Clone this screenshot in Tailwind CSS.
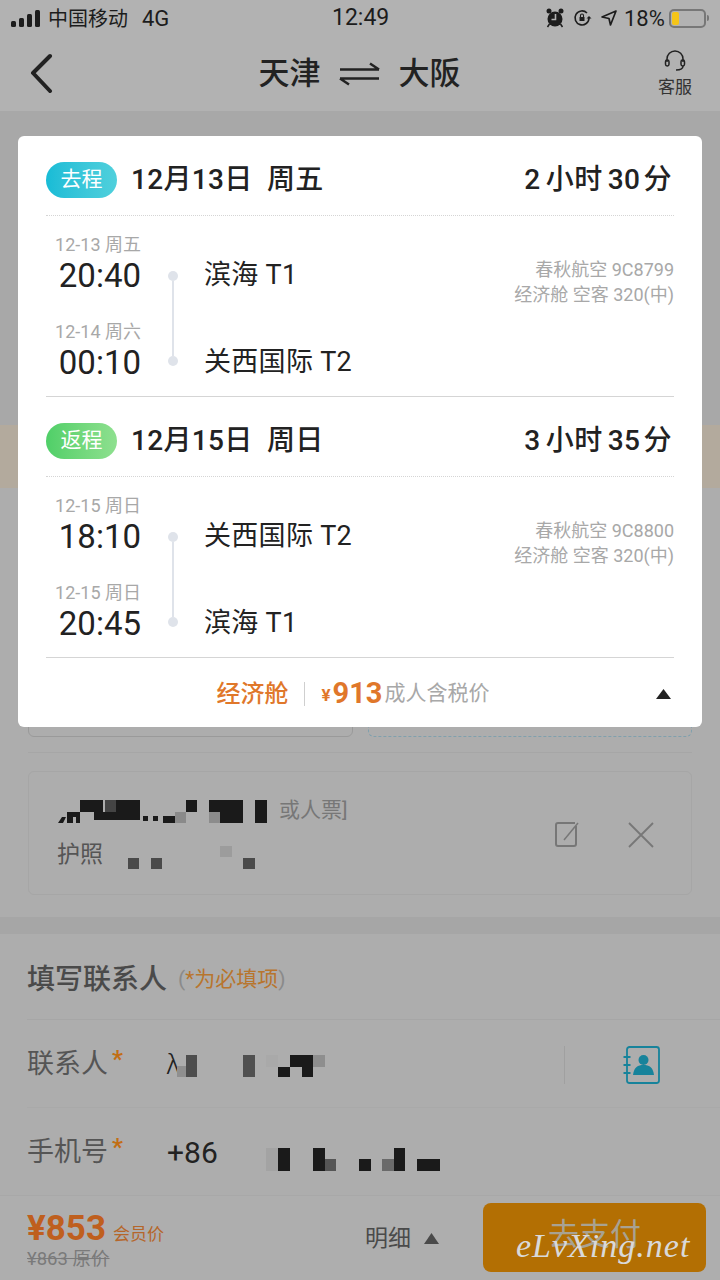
<!DOCTYPE html>
<html lang="zh">
<head>
    <meta charset="UTF-8">
    <meta name="viewport" content="width=device-width, initial-scale=1.0">
    <title>Order</title>
    <script src="https://cdn.jsdelivr.net/npm/@tailwindcss/browser@4"></script>
</head>
<body class="bg-[#adadad]">
<div class="relative w-[720px] h-[1280px] overflow-hidden font-['Roboto','Noto_Sans_CJK_SC',sans-serif] text-[#222]">

    <!-- status bar + nav -->
    <header class="h-[111px] bg-[#b2b2b2]">
        <div class="h-[36px] flex items-center pl-[11px] text-[20px] text-[#1c1c1c]">
            <svg width="32" height="18" viewBox="0 0 32 18" class="mr-[5px]" fill="#1c1c1c">
                <rect x="0" y="12" width="5" height="6" rx="1.5"/><rect x="8" y="9" width="5" height="9" rx="1.5"/><rect x="16" y="5" width="5" height="13" rx="1.5"/><rect x="24" y="1" width="5" height="17" rx="1.5"/>
            </svg>
            <span class="w-[284px]">中国移动<span class="ml-[14px] text-[22px]">4G</span></span>
            <span class="w-[213px] text-[23px]">12:49</span>
            <svg width="20" height="22" viewBox="0 0 20 22" fill="#1c1c1c"><circle cx="10" cy="12" r="7.500"/><circle cx="4" cy="4" r="2.500"/><circle cx="16" cy="4" r="2.500"/><path d="M4.500 17l-2 3M15.500 17l2 3" stroke="#1c1c1c" stroke-width="1.500"/><path d="M10.500 7v5.500H6.500" fill="none" stroke="#b2b2b2" stroke-width="1.600"/></svg>
            <svg width="20" height="20" viewBox="0 0 20 20" class="ml-[7px]" fill="none" stroke="#1c1c1c" stroke-width="1.600"><path d="M17 10a7 7 0 1 1-2-5"/><path d="M17 8l-2.500 2.500h5z" fill="#1c1c1c" stroke="none"/><rect x="7.500" y="9" width="5" height="4" fill="#1c1c1c" stroke="none"/><path d="M8.500 9V7.500a1.500 1.500 0 0 1 3 0V9" stroke-width="1.100"/></svg>
            <svg width="18" height="18" viewBox="0 0 18 18" class="ml-[8px]" fill="none" stroke="#1c1c1c" stroke-width="1.700"><path d="M16 2L2 8l7 1.500L10.500 16z" stroke-linejoin="round"/></svg>
            <span class="ml-[6px] text-[22px]">18%</span>
            <div class="ml-[4px] w-[37px] h-[19px] border-2 border-[#777] rounded-[5px] p-[1px]">
                <div class="w-[7px] h-full bg-[#f5c518] rounded-[2px]"></div>
            </div>
            <div class="ml-[1px] w-[2px] h-[6px] bg-[#777] rounded-r-full"></div>
        </div>
        <div class="h-[75px] relative flex items-center justify-center">
            <svg width="26" height="40" viewBox="0 0 26 40" class="absolute left-[29px] top-[17px]" fill="none" stroke="#222" stroke-width="4" stroke-linecap="round" stroke-linejoin="round"><path d="M21 3L4 20l17 18"/></svg>
            <div class="flex items-center text-[31px] font-medium text-[#222] -ml-[1px] mt-[1px]">
                <span>天津</span>
                <svg width="42" height="26" viewBox="0 0 42 26" class="mx-[18px]" fill="none" stroke="#222" stroke-width="2.500"><path d="M1 8.500h39M31 2.500l9 6M1 17.500h39M10 23.500l-9-6"/></svg>
                <span>大阪</span>
            </div>
            <div class="absolute right-[28px] top-[13px] flex flex-col items-center text-[17px] leading-[22px] text-[#333]">
                <svg width="24" height="24" viewBox="0 0 24 24" class="mb-[3px]" fill="none" stroke="#222" stroke-width="1.500"><path d="M4 13V10a8 8 0 0 1 16 0v3"/><rect x="2.500" y="11" width="3.500" height="6" rx="1.700"/><rect x="18" y="11" width="3.500" height="6" rx="1.700"/><path d="M20 17c0 3-3 4-7 4"/></svg>
                <span>客服</span>
            </div>
        </div>
    </header>

    <!-- page behind the sheet -->
    <main>
        <div class="h-[314px] bg-[#a8a8a8]"></div>
        <div class="h-[63px] bg-[#b3aa9d]"></div>
        <div class="h-[212px]"></div>
        <div class="h-[53px] mx-[28px] flex gap-[15px] border-b border-[#a6a6a6] pb-[15px]">
            <div class="w-[325px] border border-[#9a9a9a] rounded-[6px] -mt-[15px]"></div>
            <div class="flex-1 border border-dashed border-[#7fa0ad] rounded-[6px] -mt-[15px]"></div>
        </div>
        <div class="relative mt-[18px] mx-[28px] h-[124px] border border-[#a6a6a6] rounded-[6px] flex items-center">
            <div class="pl-[28px] w-full pt-[6px]">
                <div class="pl-[222px] h-[30px] text-[21px] leading-[26px] text-[#777] -mt-[4px]">或人票]</div>
                <div class="mt-[12px] text-[23px] leading-[32px] text-[#555]">护照</div>
            </div>
            <svg width="28" height="28" viewBox="0 0 28 28" class="absolute left-[524px] top-[48px]" fill="none" stroke="#777" stroke-width="2"><path d="M23 6v18a2 2 0 0 1-2 2H5a2 2 0 0 1-2-2V5a2 2 0 0 1 2-2h17"/><path d="M25 3L11 20" stroke-width="1.500"/></svg>
            <svg width="28" height="28" viewBox="0 0 28 28" class="absolute left-[598px] top-[49px]" fill="none" stroke="#777" stroke-width="1.800"><path d="M2 2l24 24M26 2L2 26"/></svg>
        </div>
        <div class="h-[22px]"></div>
        <div class="h-[17px] bg-[#a6a6a6]"></div>
        <section class="pl-[27px]">
            <div class="h-[86px] flex items-center border-b border-[#a6a6a6] pt-[6px]">
                <span class="text-[28px] font-medium text-[#4a4a4a]">填写联系人</span>
                <span class="ml-[11px] text-[21px] text-[#8a8a8a]">(<span class="text-[#b8752e]">*为必填项</span>)</span>
            </div>
            <div class="h-[88px] flex items-center border-b border-[#a9a9a9] text-[27px] text-[#555] pt-[2px]">
                <span class="w-[139px] relative">联系人<span class="absolute left-[85px] top-0 text-[24px] leading-[30px] font-bold text-[#c26e14]">*</span></span>
                <span class="text-[#222] text-[28px] font-light">λ</span>
                <div class="ml-auto w-[1px] h-[38px] bg-[#a0a0a0] mr-[58px]"></div>
                <svg width="38" height="38" viewBox="0 0 38 38" class="mr-[59px]" fill="none" stroke="#17839b" stroke-width="1.800">
                    <rect x="4" y="1" width="32" height="36" rx="2.500"/>
                    <path d="M0.500 11h7M0.500 19h7M0.500 27h7"/>
                    <circle cx="20.500" cy="14" r="5" fill="#17839b" stroke="none"/>
                    <path d="M10 29c1-8 5-10 10.500-10s9.500 2 10.500 10z" fill="#17839b" stroke="none"/>
                </svg>
            </div>
            <div class="h-[87px] flex items-center text-[27px] text-[#555] pt-[2px]">
                <span class="w-[140px] relative">手机号<span class="absolute left-[85px] top-0 text-[24px] leading-[30px] font-bold text-[#c26e14]">*</span></span>
                <span class="text-[#222] text-[30px]">+86</span>
            </div>
        </section>
    </main>

    <!-- pixelated personal data -->
    <svg width="720" height="1280" viewBox="0 0 720 1280" class="absolute left-0 top-0">
        <g fill="#1a1a1a">
            <path d="M58 823l4-6 4 0-3 6zM67 812h13v11h-4v-6h-3v6h-6z"/>
            <rect x="80" y="800" width="23" height="12"/><rect x="105" y="800" width="11" height="12" fill="#444"/>
            <rect x="116" y="800" width="24" height="20"/><rect x="94" y="812" width="24" height="8"/>
            <rect x="143" y="816" width="5" height="5"/><rect x="153" y="816" width="5" height="5"/>
            <rect x="186" y="800" width="11" height="12"/><rect x="163" y="816" width="12" height="7"/>
            <rect x="175" y="812" width="11" height="11" fill="#8a8a8a"/>
            <rect x="209" y="800" width="34" height="12"/><rect x="220" y="812" width="23" height="11"/><rect x="209" y="812" width="11" height="11" fill="#8c8c8c"/>
            <rect x="255" y="800" width="12" height="23"/>
            <rect x="128" y="858" width="11" height="11" fill="#4a4a4a"/><rect x="151" y="858" width="11" height="11" fill="#4a4a4a"/>
            <rect x="220" y="846" width="12" height="11" fill="#9c9c9c"/><rect x="243" y="858" width="12" height="11" fill="#4a4a4a"/>

            <rect x="186" y="1055" width="11" height="22" fill="#4d4d4d"/><rect x="177" y="1066" width="9" height="11" fill="#8f8f8f"/>
            <rect x="243" y="1055" width="12" height="22" fill="#505050"/><rect x="266" y="1055" width="12" height="12" fill="#a9a9a9"/>
            <rect x="278" y="1067" width="12" height="10"/><rect x="290" y="1055" width="23" height="12"/><rect x="302" y="1067" width="11" height="10"/><rect x="313" y="1055" width="12" height="12" fill="#8e8e8e"/>

            <rect x="266" y="1148" width="12" height="23" fill="#a3a3a3"/><rect x="278" y="1148" width="12" height="23"/>
            <rect x="313" y="1148" width="12" height="23"/><rect x="325" y="1159" width="11" height="12" fill="#555"/>
            <rect x="359" y="1159" width="12" height="12"/><rect x="382" y="1159" width="12" height="12" fill="#6a6a6a"/><rect x="394" y="1148" width="11" height="23"/>
            <rect x="417" y="1159" width="23" height="12"/>
        </g>
    </svg>

    <!-- bottom bar -->
    <footer class="absolute left-0 right-0 bottom-0 h-[85px] bg-[#aeaeae] border-t border-[#a8a8a8] flex items-center pl-[27px] pr-[14px]">
        <div class="w-[338px] mt-[4px]">
            <div class="flex items-baseline leading-[34px]">
                <span class="text-[35px] font-bold text-[#bf5f1e]">¥853</span>
                <span class="ml-[7px] text-[17px] text-[#b5662a]">会员价</span>
            </div>
            <div class="text-[18.500px] leading-[20px] -mt-[2px] text-[#7a7a7a] line-through">¥863 原价</div>
        </div>
        <span class="text-[23px] text-[#4a4a4a] mt-[2px]">明细</span>
        <svg width="15" height="11" viewBox="0 0 15 11" class="ml-[13px]" fill="#4a4a4a"><path d="M7.500 0L15 11H0z"/></svg>
        <div class="ml-auto relative w-[223px] h-[69px] bg-[#b36f03] rounded-[8px] flex items-center justify-center text-[31px] text-[#a8a292] -mt-[1px] pb-[4px]">
            去支付
        </div>
    </footer>
    <div class="absolute left-[516px] top-[1226px] font-['Liberation_Serif',serif] italic text-[34px] leading-[40px] tracking-[1px] text-[#d9d9d9]">eLvXing.net</div>

    <!-- flight sheet -->
    <div class="absolute left-[18px] top-[136px] w-[684px] h-[591px] bg-white rounded-[6px] px-[28px]">
        <section>
            <div class="h-[80px] flex items-center border-b border-dotted border-[#d5d5d5] pt-[8px]">
                <span class="w-[71px] h-[36px] rounded-full bg-gradient-to-r from-[#17bcd6] to-[#4fd0dc] text-white text-[21px] flex items-center justify-center">去程</span>
                <span class="ml-[14px] text-[28px] font-medium tracking-[0.3px] mt-[1px]">12月13日&nbsp; 周五</span>
                <span class="ml-auto text-[28px] font-medium tracking-[0.5px] mt-[1px] pr-[2px]">2<span class="mx-[5px]">小时</span>30<span class="ml-[3px]">分</span></span>
            </div>
            <div class="grid grid-cols-[95px_64px_1fr] grid-rows-[87px_auto] h-[181px] pt-[19px] border-b border-[#d5d5d5]">
                <div class="text-right">
                    <div class="text-[18px] leading-[20px] text-[#a8a8a8]">12-13 周五</div>
                    <div class="text-[33px] leading-[41px]">20:40</div>
                </div>
                <div class="row-span-2 flex flex-col items-center pt-[36px]">
                    <span class="w-[10px] h-[10px] rounded-full bg-[#dfe3ea]"></span>
                    <span class="w-[2px] h-[75px] bg-[#dfe3ea]"></span>
                    <span class="w-[10px] h-[10px] rounded-full bg-[#dfe3ea]"></span>
                </div>
                <div class="flex justify-between pt-[22px]">
                    <span class="text-[27px] leading-[36px] tracking-[0.3px] -ml-[1px]">滨海 T1</span>
                    <div class="text-right text-[18px] leading-[25px] text-[#a8a8a8]">春秋航空 9C8799<br>经济舱 空客 320(中)</div>
                </div>
                <div class="text-right">
                    <div class="text-[18px] leading-[20px] text-[#a8a8a8]">12-14 周六</div>
                    <div class="text-[33px] leading-[41px]">00:10</div>
                </div>
                <div class="pt-[22px] text-[27px] leading-[36px] tracking-[0.3px] -ml-[1px]">关西国际 T2</div>
            </div>
        </section>
        <section>
            <div class="h-[80px] flex items-center border-b border-dotted border-[#d5d5d5] pt-[8px]">
                <span class="w-[71px] h-[36px] rounded-full bg-gradient-to-r from-[#4fcf68] to-[#8ee08f] text-white text-[21px] flex items-center justify-center">返程</span>
                <span class="ml-[14px] text-[28px] font-medium tracking-[0.3px] mt-[1px]">12月15日&nbsp; 周日</span>
                <span class="ml-auto text-[28px] font-medium tracking-[0.5px] mt-[1px] pr-[2px]">3<span class="mx-[5px]">小时</span>35<span class="ml-[3px]">分</span></span>
            </div>
            <div class="grid grid-cols-[95px_64px_1fr] grid-rows-[87px_auto] h-[181px] pt-[19px] border-b border-[#d5d5d5]">
                <div class="text-right">
                    <div class="text-[18px] leading-[20px] text-[#a8a8a8]">12-15 周日</div>
                    <div class="text-[33px] leading-[41px]">18:10</div>
                </div>
                <div class="row-span-2 flex flex-col items-center pt-[36px]">
                    <span class="w-[10px] h-[10px] rounded-full bg-[#dfe3ea]"></span>
                    <span class="w-[2px] h-[75px] bg-[#dfe3ea]"></span>
                    <span class="w-[10px] h-[10px] rounded-full bg-[#dfe3ea]"></span>
                </div>
                <div class="flex justify-between pt-[22px]">
                    <span class="text-[27px] leading-[36px] tracking-[0.3px] -ml-[1px]">关西国际 T2</span>
                    <div class="text-right text-[18px] leading-[25px] text-[#a8a8a8]">春秋航空 9C8800<br>经济舱 空客 320(中)</div>
                </div>
                <div class="text-right">
                    <div class="text-[18px] leading-[20px] text-[#a8a8a8]">12-15 周日</div>
                    <div class="text-[33px] leading-[41px]">20:45</div>
                </div>
                <div class="pt-[22px] text-[27px] leading-[36px] tracking-[0.3px] -ml-[1px]">滨海 T1</div>
            </div>
        </section>
        <div class="relative h-[69px] flex items-center justify-center pr-[14px] pt-[2px]">
            <span class="text-[24px] font-medium text-[#e0772a]">经济舱</span>
            <span class="mx-[16px] w-[1px] h-[24px] bg-[#cfcfcf]"></span>
            <span class="text-[17px] font-bold text-[#e0772a] mt-[4px]">¥</span>
            <span class="text-[29px] font-bold text-[#e0772a] ml-[2px]">913</span>
            <span class="text-[21px] text-[#a8a8a8] ml-[2px]">成人含税价</span>
            <svg width="15" height="10" viewBox="0 0 15 10" class="absolute right-[3px] top-[31px]" fill="#222"><path d="M7.500 0L15 10H0z"/></svg>
        </div>
    </div>
</div>
</body>
</html>
